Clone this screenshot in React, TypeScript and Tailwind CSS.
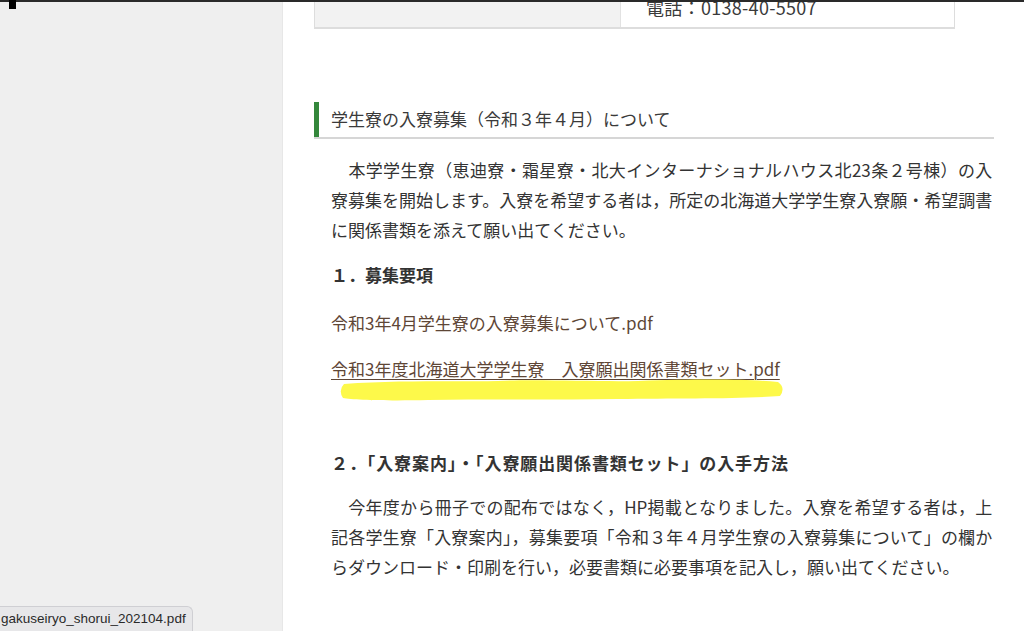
import React from "react";

function JLine({ children, full, indent }: { children: React.ReactNode; full?: boolean; indent?: boolean }) {
  return (
    <div
      className={
        "whitespace-nowrap " + (full ? "text-justify [text-align-last:justify]" : "")
      }
    >
      {indent ? "\u3000" : ""}
      {children}
    </div>
  );
}

export default function App() {
  return (
    <div className="relative w-[1024px] h-[631px] overflow-hidden bg-white flex flex-col font-['Noto_Sans_CJK_JP','Noto_Sans',sans-serif]">
      <div className="h-[2px] shrink-0 bg-[#2a2a2a] relative z-10" />
      <div className="flex flex-1 min-h-0">
        <aside className="w-[283px] shrink-0 bg-[#efefef] border-r border-[#e7e7e7]" />
        <main className="flex-1 pl-[31px] pr-[32px] text-[#333333]">
          {/* table remnant */}
          <div className="mt-[-28px] w-[641px] flex border-l border-r border-b-2 border-[#dddddd]">
            <div className="w-[306px] shrink-0 bg-[#f2f2f2] border-r border-[#e2e2e2]" />
            <div className="flex-1 pl-[25px] pt-[20px] pb-[7px] text-[18px] leading-[26px] tracking-[0.3px] text-[#3a3a3a]">
              電話：0138-40-5507
            </div>
          </div>

          {/* section heading */}
          <div className="mt-[73px] border-b-2 border-[#d6d6d6]">
            <div className="border-l-[5px] border-[#34873b] pl-[12px] pt-[4px] pb-[6px] text-[17px] leading-[25px] text-[#3a3a3a]">
              学生寮の入寮募集（令和３年４月）について
            </div>
          </div>

          {/* paragraph 1 */}
          <div className="mt-[16px] pl-[17px] pr-[2px] text-[17px] leading-[30px]">
            <JLine full indent>本学学生寮（恵迪寮・霜星寮・北大インターナショナルハウス北23条２号棟）の入</JLine>
            <JLine full>寮募集を開始します。入寮を希望する者は，所定の北海道大学学生寮入寮願・希望調書</JLine>
            <JLine>に関係書類を添えて願い出てください。</JLine>
          </div>

          <div className="mt-[15px] pl-[17px] text-[17px] leading-[30px] font-bold">
            １．募集要項
          </div>

          <div className="mt-[18px] pl-[17px] text-[17px] leading-[30px] text-[#5e4636]">
            令和3年4月学生寮の入寮募集について.pdf
          </div>

          <div className="relative mt-[16px] pl-[17px] text-[17px] leading-[30px] text-[#5e4636]">
            <span className="underline underline-offset-[3px] decoration-[1px]">
              令和3年度北海道大学学生寮　入寮願出関係書類セット.pdf
            </span>
            <svg
              className="absolute left-[24px] top-[23px]"
              width="448"
              height="24"
              viewBox="0 0 448 24"
            >
              <path
                d="M6,7 C60,3 120,5 160,4 C200,2 260,5 300,4 C360,2 410,2 440,5 Q448,11 442,19 C400,22 340,21 280,22 C220,23 150,22 90,23 C50,24 15,23 5,21 Q0,13 6,7 Z"
                fill="#fdf94a"
              />
            </svg>
          </div>

          <div className="mt-[64px] pl-[17px] text-[17px] leading-[30px] font-bold tracking-[0.9px]">
            ２．「入寮案内」・「入寮願出関係書類セット」の入手方法
          </div>

          <div className="mt-[14px] pl-[17px] pr-[2px] text-[17px] leading-[30px]">
            <JLine full indent>今年度から冊子での配布ではなく，HP掲載となりました。入寮を希望する者は，上</JLine>
            <JLine full>記各学生寮「入寮案内」，募集要項「令和３年４月学生寮の入寮募集について」の欄か</JLine>
            <JLine>らダウンロード・印刷を行い，必要書類に必要事項を記入し，願い出てください。</JLine>
          </div>
        </main>
      </div>

      {/* cursor mark */}
      <div className="absolute left-[9px] top-0 w-[7px] h-[9px] bg-black z-20" />

      {/* status bar */}
      <div className="absolute left-0 bottom-0 h-[25px] w-[193px] bg-[#e7e7e9] border-t border-r border-[#cfcfd3] rounded-tr-[6px] pl-[1px] text-[13.5px] leading-[23px] text-[#2a2a2a] font-['Liberation_Sans',Arial,sans-serif] whitespace-nowrap overflow-hidden">
        gakuseiryo_shorui_202104.pdf
      </div>
    </div>
  );
}
